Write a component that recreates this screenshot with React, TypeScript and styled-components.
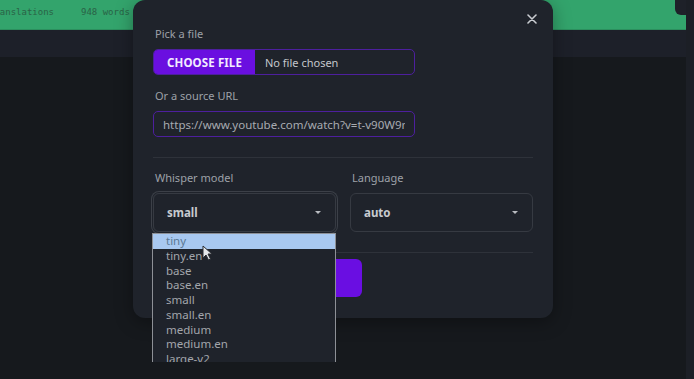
import React from "react";
import styled, { createGlobalStyle } from "styled-components";

const GlobalStyle = createGlobalStyle`
  html, body {
    margin: 0;
    padding: 0;
    background: #16191d;
    overflow: hidden;
  }
  * {
    box-sizing: border-box;
  }
`;

const Page = styled.div`
  position: relative;
  width: 694px;
  height: 379px;
  display: flex;
  overflow: hidden;
  font-family: "Noto Sans", "Open Sans", sans-serif;
`;

const MainColumn = styled.div`
  flex: 1;
  display: flex;
  flex-direction: column;
`;

const ScrollStrip = styled.div`
  width: 8px;
  background: #1c1f26;
`;

const Banner = styled.div`
  height: 30px;
  background: #33a46c;
  border-bottom: 1px solid #2c8f5e;
  display: flex;
  align-items: flex-start;
`;

const BannerStats = styled.div`
  display: flex;
  gap: 27px;
  margin-left: -11px;
  padding-top: 6px;
  font-family: "DejaVu Sans Mono", "Liberation Mono", monospace;
  font-size: 9px;
  line-height: 12px;
  color: #2a6246;
`;

const BannerTab = styled.div`
  margin-left: auto;
  width: 11px;
  height: 15px;
  background: #1e2129;
  border-bottom-left-radius: 6px;
`;

const SubHeader = styled.div`
  height: 27px;
  background: #1d2029;
`;

const Body = styled.div`
  flex: 1;
  background: #16191d;
`;

const Dialog = styled.div`
  position: absolute;
  left: 133px;
  top: 0;
  width: 420px;
  height: 318px;
  background: #1f232b;
  border-radius: 12px;
  padding: 26px 20px 21px;
  display: flex;
  flex-direction: column;
  box-shadow: 0 4px 18px rgba(0, 0, 0, 0.35);
`;

const CloseButton = styled.button`
  position: absolute;
  top: 12px;
  right: 14px;
  width: 14px;
  height: 14px;
  padding: 0;
  border: none;
  background: none;
  display: flex;
  align-items: center;
  justify-content: center;
`;

const Label = styled.div`
  font-size: 11px;
  line-height: 16px;
  color: #9da1a8;
  padding-left: 2px;
  margin-bottom: 7px;
`;

const Field = styled.div<{ $gap?: number }>`
  margin-top: ${(p) => p.$gap ?? 0}px;
`;

const FileBox = styled.div`
  width: 262px;
  height: 26px;
  border: 1px solid #4d1f9e;
  border-radius: 5px;
  display: flex;
  align-items: center;
  overflow: hidden;
`;

const FileButton = styled.div`
  width: 101px;
  height: 100%;
  background: #6a0fe0;
  color: #f2ecff;
  font-weight: 700;
  font-size: 11.5px;
  display: flex;
  align-items: center;
  justify-content: center;
  letter-spacing: 0.1px;
`;

const FileText = styled.span`
  margin-left: 10px;
  font-size: 11px;
  color: #c4c7cc;
`;

const UrlInput = styled.input`
  width: 262px;
  height: 26px;
  border: 1px solid #4d1f9e;
  border-radius: 5px;
  background: transparent;
  padding: 0 9px;
  font-family: "Noto Sans", "Open Sans", sans-serif;
  font-size: 11.5px;
  color: #a8abb1;
  outline: none;
`;

const Divider = styled.div<{ $top: number }>`
  height: 1px;
  background: #2e323a;
  margin-top: ${(p) => p.$top}px;
`;

const SelectRow = styled.div`
  display: grid;
  grid-template-columns: 1fr 1fr;
  gap: 14px;
  margin-top: 12px;
`;

const SelectColumn = styled.div`
  position: relative;
`;

const SelectBox = styled.div<{ $focused?: boolean }>`
  height: 39px;
  border: 1px solid #363a42;
  border-radius: 6px;
  display: flex;
  align-items: center;
  justify-content: space-between;
  padding: 0 14px 0 13px;
  font-size: 11.5px;
  font-weight: 700;
  color: #c8cbd0;
  box-shadow: ${(p) =>
    p.$focused ? "0 0 0 1px #1f232b, 0 0 0 2px #3c4048" : "none"};
`;

const Caret = styled.span`
  width: 0;
  height: 0;
  border-left: 3px solid transparent;
  border-right: 3px solid transparent;
  border-top: 3px solid #b9bcc1;
`;

const OptionList = styled.ul`
  position: absolute;
  left: -1px;
  top: calc(100% + 1px);
  width: 184px;
  height: 129px;
  margin: 0;
  padding: 0;
  list-style: none;
  background: #1f232b;
  border: 1px solid #8d9096;
  border-bottom: none;
  overflow: hidden;
  z-index: 2;
`;

const Option = styled.li<{ $active?: boolean }>`
  height: 14.75px;
  line-height: 14.75px;
  padding-left: 13px;
  font-size: 11.5px;
  color: ${(p) => (p.$active ? "#5b7894" : "#a3a6ac")};
  background: ${(p) => (p.$active ? "#a8c8f0" : "transparent")};
`;

const SubmitButton = styled.button`
  width: 209px;
  height: 38px;
  margin-top: 6px;
  border: none;
  border-radius: 6px;
  background: #6a0ee2;
  color: #ffffff;
  font-family: "Noto Sans", "Open Sans", sans-serif;
  font-size: 12px;
  font-weight: 700;
`;

const Pointer = styled.svg`
  position: absolute;
  left: 202px;
  top: 245px;
  z-index: 3;
`;

const models = [
  "tiny",
  "tiny.en",
  "base",
  "base.en",
  "small",
  "small.en",
  "medium",
  "medium.en",
  "large-v2",
];

export default function App() {
  return (
    <>
      <GlobalStyle />
      <Page>
        <MainColumn>
          <Banner>
            <BannerStats>
              <span>Translations</span>
              <span>948 words</span>
            </BannerStats>
            <BannerTab />
          </Banner>
          <SubHeader />
          <Body />
        </MainColumn>
        <ScrollStrip />

        <Dialog>
          <CloseButton aria-label="Close">
            <svg width="10" height="10" viewBox="0 0 10 10">
              <path
                d="M1 1L9 9M9 1L1 9"
                stroke="#c9ccd1"
                strokeWidth="1.6"
                strokeLinecap="round"
              />
            </svg>
          </CloseButton>

          <Field>
            <Label>Pick a file</Label>
            <FileBox>
              <FileButton>CHOOSE FILE</FileButton>
              <FileText>No file chosen</FileText>
            </FileBox>
          </Field>

          <Field $gap={13}>
            <Label>Or a source URL</Label>
            <UrlInput readOnly value="https://www.youtube.com/watch?v=t-v90W9nBcw" />
          </Field>

          <Divider $top={20} />

          <SelectRow>
            <SelectColumn>
              <Label>Whisper model</Label>
              <SelectBox $focused>
                <span>small</span>
                <Caret />
              </SelectBox>
              <OptionList>
                {models.map((m, i) => (
                  <Option key={m} $active={i === 0}>
                    {m}
                  </Option>
                ))}
              </OptionList>
            </SelectColumn>
            <SelectColumn>
              <Label>Language</Label>
              <SelectBox>
                <span>auto</span>
                <Caret />
              </SelectBox>
            </SelectColumn>
          </SelectRow>

          <Divider $top={20} />

          <SubmitButton>Transcribe</SubmitButton>
        </Dialog>

        <Pointer width="11" height="16" viewBox="0 0 11 16">
          <path
            d="M1 1L1 13L4 10L6.5 15L8.5 14L6 9L10 9Z"
            fill="#e6e8eb"
            stroke="#2a2d33"
            strokeWidth="1"
            strokeLinejoin="round"
          />
        </Pointer>
      </Page>
    </>
  );
}
